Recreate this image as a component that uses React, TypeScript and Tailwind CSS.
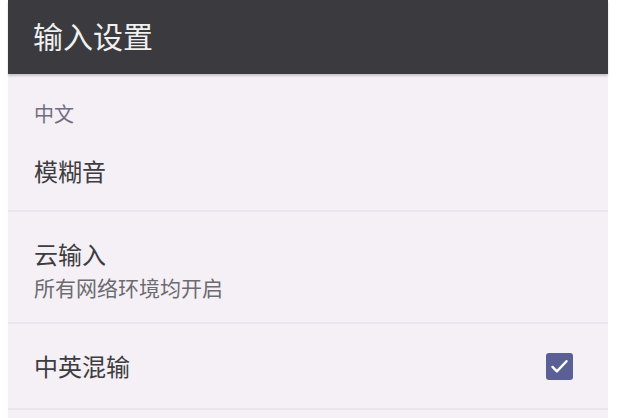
export default function App() {
  const font = { fontFamily: '"Noto Sans CJK SC", "Noto Sans", sans-serif' }
  return (
    <div className="w-[621px] h-[418px] bg-white overflow-hidden" style={font}>
      <div className="ml-2 w-[600px] h-[418px] bg-[#f5f0f6] flex flex-col">
        {/* 标题栏 */}
        <header className="h-[74px] bg-[#3b3a3f] flex items-center pl-[25px] pb-[4px] shadow-[0_2px_2px_rgba(0,0,0,0.18)] relative z-10">
          <h1 className="text-[30px] leading-[40px] text-[#f0f0f0] font-normal">输入设置</h1>
        </header>

        {/* 中文 */}
        <section className="pl-[26px] pt-[28px] pb-[23px]">
          <div className="text-[20px] leading-[24px] text-[#6f6e80]">中文</div>
          <div className="mt-[29px] text-[24px] leading-[32px] text-[#3d3c40]">模糊音</div>
        </section>
        <div className="h-[2px] bg-[#ebe6ee]" />

        {/* 云输入 */}
        <section className="pl-[26px] pt-[27px] pb-[22px]">
          <div className="text-[24px] leading-[30px] text-[#3d3c40]">云输入</div>
          <div className="mt-[5px] text-[21px] leading-[26px] text-[#6c6b70]">所有网络环境均开启</div>
        </section>
        <div className="h-[2px] bg-[#ebe6ee]" />

        {/* 中英混输 */}
        <section className="h-[84px] flex items-center justify-between pl-[26px] pr-[35px]">
          <div className="text-[24px] leading-[32px] text-[#3d3c40]">中英混输</div>
          <div className="w-[27px] h-[27px] rounded-[3px] bg-[#5a5f96] flex items-center justify-center">
            <svg width="21" height="21" viewBox="0 0 24 24" fill="none" stroke="white" strokeWidth="2.8" strokeLinecap="round" strokeLinejoin="round">
              <path d="M4 12.5l5 5L20 6" />
            </svg>
          </div>
        </section>
        <div className="h-[2px] bg-[#ebe6ee]" />
      </div>
    </div>
  )
}
